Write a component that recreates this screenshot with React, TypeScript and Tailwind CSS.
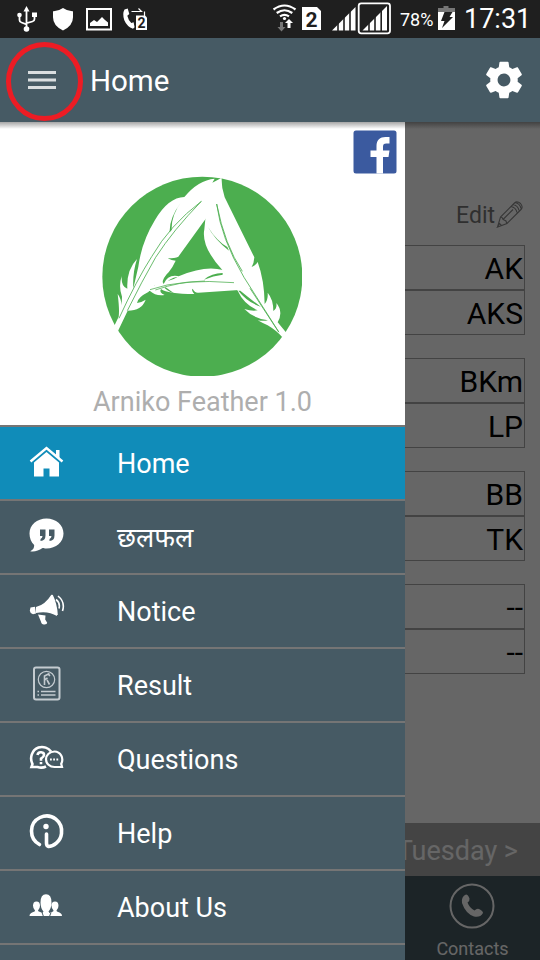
import React from "react";

const groups = [["AK", "AKS"], ["BKm", "LP"], ["BB", "TK"], ["--", "--"]];

function StatusBar() {
  return (
    <div className="flex h-[38px] shrink-0 items-center bg-[#1f1f1f] text-white">
      <svg className="ml-[16px]" width="22" height="38" viewBox="16 0 22 38" fill="none" stroke="#fff" strokeWidth="1.8">
        <path d="M26.500 10v18M19.500 16v4q0 2 2 2.500l5 1.800M34.500 16v3q0 2-2 2.500l-6 1.600" />
        <path d="M26.500 6l3 5.500h-6zM32 12.500h5v4.500h-5z" fill="#fff" stroke="none" />
        <circle cx="19.500" cy="15" r="2.300" fill="#fff" stroke="none" />
        <circle cx="26.500" cy="29" r="2.800" fill="#fff" stroke="none" />
      </svg>
      <svg className="ml-[14px]" width="22" height="38" viewBox="52 0 22 38">
        <path d="M63 8q5 3.500 10 3.200v6q0 8.500-10 13.200q-10-4.700-10-13.200v-6q5 .3 10-3.200z" fill="#fff" />
      </svg>
      <svg className="ml-[11px]" width="28" height="38" viewBox="85 0 28 38">
        <path d="M87 9h24v20.500H87z" fill="none" stroke="#fff" strokeWidth="2" />
        <path d="M90 26v-3l4-3 3 2 5-5 3 3 3 2.500v3.500z" fill="#fff" />
      </svg>
      <svg className="ml-[9px]" width="27" height="38" viewBox="122 0 27 38">
        <path d="M124.500 9.500l3.200-1 1.600 5.500-2 1.700q1 4.500 4 7.300l2.300-.8 1 5-1.600 1.500q-6-2-8.700-8.400-2.200-6.500.2-10.800z" fill="#fff" />
        <path d="M131.500 11.500h10l-3-3M144.500 16v-4.500" fill="none" stroke="#fff" strokeWidth="1.200" />
        <path d="M136 15.500h9l2 2v12.500h-11z" fill="#fff" />
        <text x="137.500" y="28" fontFamily="Roboto, sans-serif" fontSize="14" fontWeight="700" fill="#1f1f1f">2</text>
      </svg>
      <svg className="ml-[123px]" width="26" height="38" viewBox="272 0 26 38">
        <g fill="none" stroke="#fff" strokeWidth="2.200">
          <path d="M273.500 9.500q11-8 22 0M276.700 13q7.800-5.500 15.600 0M280 16.400q4.500-3 9 0" />
        </g>
        <circle cx="284.500" cy="18.500" r="1.600" fill="#fff" />
        <path d="M280 22h3v5h2.500l-4 4.500-4-4.500h2.500z" fill="#777" />
        <path d="M287.500 28v-5H285l4-4 4 4h-2.500v5z" fill="#fff" />
      </svg>
      <svg className="ml-[4px]" width="20" height="38" viewBox="302 0 20 38">
        <path d="M302 7h15l4 4v19h-19z" fill="#fff" />
        <text x="305.500" y="26.500" fontFamily="Roboto, sans-serif" fontSize="21" fontWeight="700" fill="#1f1f1f">2</text>
      </svg>
      <svg className="ml-[9px]" width="62" height="38" viewBox="331 0 62 38">
        <path d="M332 30.500L355.500 7v23.500z" fill="#fff" />
        <path d="M338 20v11M344 15v16M350 9v22" stroke="#1f1f1f" strokeWidth="1.600" />
        <rect x="358.700" y="3.300" width="31.300" height="30" rx="2.500" fill="#1f1f1f" stroke="#fff" strokeWidth="1.800" />
        <path d="M362.500 30.500L387 6v24.500z" fill="#fff" />
        <path d="M369 20v11M375 15v16M381.200 9v22" stroke="#1f1f1f" strokeWidth="1.600" />
      </svg>
      <span className="mt-[2px] ml-[7px] w-[36px] whitespace-nowrap text-[18px] leading-none">78%</span>
      <svg className="ml-[2px]" width="18" height="38" viewBox="438 0 18 38">
        <path d="M438 8h5.500V6h5v2h6.500v4h-17z" fill="#777" />
        <path d="M438 12h17v18h-17z" fill="#fff" />
        <path d="M444.500 12h8l-3 5h3.500l-11 11 2.500-7h-3.500z" fill="#1f1f1f" />
      </svg>
      <span className="ml-[8px] whitespace-nowrap text-[27px] leading-none">17:31</span>
    </div>
  );
}

function AppBar() {
  return (
    <div className="flex h-[84px] shrink-0 items-center bg-[#465a64] text-white">
      <svg width="84" height="84" viewBox="0 38 84 84">
        <ellipse cx="44.500" cy="81.500" rx="36" ry="37" fill="none" stroke="#ed1c24" strokeWidth="5" />
        <path d="M28 72.500h28M28 80h28M28 87.500h28" stroke="#dadee0" strokeWidth="3" />
      </svg>
      <span className="mt-[3px] ml-[6px] text-[29.5px] leading-none">Home</span>
      <svg className="mr-[14px] ml-auto" width="44" height="44" viewBox="0 0 24 24" fill="#fff">
        <path d="M19.430 12.980c.04-.32.07-.64.07-.98s-.03-.66-.07-.98l2.110-1.650c.19-.15.24-.42.12-.64l-2-3.460c-.12-.22-.39-.3-.61-.22l-2.490 1c-.52-.4-1.080-.73-1.690-.98l-.38-2.650A.488.488 0 0 0 14 2h-4c-.25 0-.46.18-.49.42l-.38 2.650c-.61.25-1.170.59-1.690.98l-2.490-1c-.23-.09-.49 0-.61.22l-2 3.460c-.13.22-.07.49.12.64l2.110 1.650c-.04.32-.07.65-.07.98s.03.66.07.98l-2.110 1.650c-.19.15-.24.42-.12.64l2 3.460c.12.22.39.3.61.22l2.490-1c.52.4 1.080.73 1.690.98l.38 2.650c.03.24.24.42.49.42h4c.25 0 .46-.18.49-.42l.38-2.650c.61-.25 1.170-.59 1.690-.98l2.490 1c.23.09.49 0 .61-.22l2-3.460c.12-.22.07-.49-.12-.64l-2.110-1.650zM12 15.500c-1.930 0-3.500-1.570-3.500-3.500s1.570-3.500 3.500-3.500 3.500 1.570 3.500 3.500-1.570 3.500-3.500 3.500z" />
      </svg>
    </div>
  );
}

function Logo() {
  return (
    <svg width="215" height="215" viewBox="0 0 645 645">
      <clipPath id="disc"><path d="M0 0h621v618H0z" /></clipPath>
      <circle cx="322" cy="320" r="300" fill="#4cae4f" clipPath="url(#disc)" />
      <g fill="#fff">
        <path d="M379 24L352 38L359 26Q310 30 268 81Q220 82 180 150Q140 215 130 290Q122 325 115 355Q112 310 126 267Q94 300 97 356Q78 350 80 318Q70 350 81 380L80 405Q78 385 68 372Q74 420 71 440L58 467L69 483L98 422Q140 422 152 389Q138 398 126 399Q128 382 160 366L195 330Q225 310 242 272Q230 272 218 265Q240 265 250 260L330 149L379 90Z" />
        <path d="M379 24Q380 55 389 82L440 185L478 262Q477 280 470 291Q483 286 488 276Q508 330 509 402Q520 390 518 368Q535 388 535 423Q547 415 544 399Q566 425 548 457L574 488L562 502Q545 482 518 466Q502 459 488 451Q505 454 519 451Q475 445 448 417Q470 424 488 421Q446 402 428 362L382 300Q318 230 328 178L331 148L345 60Z" />
        <path d="M384 300Q330 285 253 318Q238 328 218 333Q235 320 255 320Q220 310 206 342Q198 335 213 315Q184 325 178 347Q155 348 128 361Q148 358 165 363Q182 379 209 375Q191 368 198 357Q218 372 298 372Q288 360 293 356Q299 369 310 368L432 360Z" />
      </g>
      <g fill="none" stroke="#4cae4f">
        <path d="M319 94Q225 165 170 260Q125 330 72 445M319 94Q235 180 182 262Q140 335 97 422" strokeWidth="2.500" />
        <path d="M365 102Q378 205 447 322L552 487M365 102Q389 225 442 304M465 355L551 486" strokeWidth="2.500" />
        <path d="M165 359Q260 325 417 338M181 360Q250 335 330 333" strokeWidth="2.300" />
      </g>
      <g fill="#4cae4f">
        <path d="M259 95Q222 145 224 187L230 180Q228 137 259 95ZM339 171Q360 210 402 242L397 231Q365 213 339 171ZM383 309Q350 309 327 329Q355 317 383 314ZM430 362Q457 397 497 410Q470 390 436 362ZM212 352L237 370Q217 363 208 353Z" />
      </g>
    </svg>
  );
}

const icons: Record<string, React.ReactNode> = {
  home: (
    <>
      <path d="M30.500 461.500L46.500 448l16 13.500" fill="none" stroke="#fff" strokeWidth="2.400" />
      <path d="M34 462.500l12.500-10.500L59 462.500v14h-9.500V468.500H43.500v8h-9.500zM56 450h3.500v8.500L56 455z" />
    </>
  ),
  talk: (
    <>
      <path d="M46.500 518.500c9.500 0 17 6.500 17 15s-7.500 15-17 15c-2 0-3 0-4-.4-4 2.700-8 4-12.300 3.200 3-1.300 4-3.500 4-6.200-3-2.900-4.700-7-4.700-11.600 0-8.500 7.500-15 17-15z" />
      <path d="M40 529.500h5.500v6q0 5-5 5.500v-2q2-.8 2-3H40zM49 529.500h5.500v6q0 5-5 5.500v-2q2-.8 2-3H49z" fill="#465a64" />
    </>
  ),
  notice: (
    <>
      <path d="M36 607q9-2 15.500-12.500 5.500 9 5.500 21.500-9-5.500-21-3zM30.500 607.500l4.500-.8 1 6.800-3 .8q-3-1-3.200-3.500zM38 614.500l7.500 1-.3 4 2 3.200q0 2-3.300 1.800-2.500 0-3-3z" />
      <path d="M52 595q4.500 9 5 20M56 599.500q4.500 3.500 3 9M58 596q7.500 6 4.500 15" fill="none" stroke="#fff" strokeWidth="1.600" />
    </>
  ),
  result: (
    <g fill="none" stroke="#c4cbd0">
      <rect x="34" y="667.500" width="25.500" height="32" rx="2" strokeWidth="2" />
      <circle cx="46.500" cy="679.500" r="8.200" strokeWidth="1.200" />
      <path d="M44.500 685v-9l5-2.500M44.500 680l3-2M47 680l2.500 4.500M48 674l2 2M37.500 691.500h1.500M41 691.500h14.500M37.500 695h1.500M41 695h14.500" strokeWidth="1.600" />
    </g>
  ),
  questions: (
    <g fill="none" stroke="#fff" strokeWidth="2.600">
      <path d="M46 766.500q-4 2-8.500.5H31.500l1-3c-3-5.500-1-14 6-16.500 5-1.500 10 .5 12.500 4" />
      <path d="M54.500 751.500c-4.700 0-8.500 3.500-8.500 7.800s3.800 7.700 8.500 7.700h7.500l-.8-3.200c3-5.500-.7-12.300-6.700-12.300z" strokeWidth="2.200" />
      <path d="M37.500 755q.5-3 3.700-2.700 3 .3 2.800 2.700 0 1.700-3 3.700v2M41 762v2.200" />
      <path d="M50 759.500h1.800M53.200 759.500h1.800M56.400 759.500h1.800" strokeWidth="1.800" />
    </g>
  ),
  help: (
    <g fill="none" stroke="#fff" strokeWidth="3.600" strokeLinecap="round">
      <path d="M39.500 844.500C29 839 28.500 823 40 817.500C52 812 63 822 61.500 833.500C60.500 842 53 846.500 48.500 846.500Q46.500 846 46.500 843V834" />
      <circle cx="46" cy="826.500" r="2.700" fill="#fff" stroke="none" />
    </g>
  ),
  about: (
    <>
      <path d="M29.500 916q0-3 4.500-4.200 1.200-.5 1-1.300-2-2-2-4.700 0-4.300 3.500-4.300t3.500 4.300q0 2.700-2 4.700 0 .8 1.500 1.300l3 1.200 1-1.500q-3-3.500-3-9 0-8.300 5.500-8.300t5.500 8.300q0 5.500-3 9l1 1.500 3-1.200q1.200-.5 1-1.300-2-2-2-4.700 0-4.300 3.500-4.300t3.500 4.300q0 2.700-2 4.700 0 .8 1 1.300 4.500 1.200 4.500 4.200z" />
      <path d="M42 912.500l1.300 3.500M51 912.500l-1.300 3.500" stroke="#465a64" strokeWidth="1" />
    </>
  ),
};

const items = [
  { id: "home", label: "Home" },
  { id: "talk", label: "छलफल" },
  { id: "notice", label: "Notice" },
  { id: "result", label: "Result" },
  { id: "questions", label: "Questions" },
  { id: "help", label: "Help" },
  { id: "about", label: "About Us" },
];

function Drawer() {
  return (
    <nav className="absolute top-0 left-0 flex h-full w-[405px] flex-col overflow-hidden bg-[#465a64]">
      <div className="flex h-[303px] shrink-0 flex-col bg-white">
        <div className="flex h-[48px] justify-end pt-[8px] pr-[8px]">
          <svg width="44" height="44" viewBox="0 0 44 44">
            <rect x=".5" y=".5" width="43" height="43" rx="2.500" fill="#3b5a9f" />
            <path d="M23.500 43.500V27h-6v-6.500h6V16c0-6 3.500-9 9-9h4v6.500h-3.200c-2.500 0-3.300 1-3.300 3.500v3.500h6.500l-1 6.500H30v16.500z" fill="#fff" />
          </svg>
        </div>
        <div className="flex h-[215px] justify-center"><Logo /></div>
        <div className="mt-[4px] text-center text-[27px] leading-[27px] text-[#aeaeae]">Arniko Feather 1.0</div>
      </div>
      {items.map((item, i) => (
        <div key={item.id} className={`flex h-[74px] shrink-0 items-center border-t-2 border-[#757575] pb-[1px] text-[27px] text-white ${i === 0 ? "bg-[#108cb9]" : ""}`}>
          <svg className="mr-[51px] ml-[28px]" width="38" height="71" viewBox={`28 ${427 + i * 74} 38 71`} fill="#fff">
            {icons[item.id]}
          </svg>
          <span className="mt-[4px] leading-none">{item.label}</span>
        </div>
      ))}
      <div className="h-[20px] shrink-0 border-t-2 border-[#757575]" />
    </nav>
  );
}

function Schedule() {
  return (
    <div className="flex h-full flex-col bg-white text-right">
      <div className="flex h-[123px] items-end justify-end pr-[16px] pb-[16px] text-[#777]">
        <span className="text-[23px] leading-[26px]">Edit</span>
        <svg className="mb-px ml-px" width="28" height="28" viewBox="496 198 28 28" fill="none" stroke="#888" strokeWidth="1.100">
          <path d="M497.500 225l3-10 14-14q2.500-2.500 6 .5 3 3.500.5 6l-14 14zM500.500 215q2 0 2.500 2.500l3 1.500q.5 2 1 2.500M503 217.500l10-10M511 204.500q5 1 6 6M513 202.500q5 1 6 6M515 200.500q5 1 6 6M497.500 225l4-1.500-2-2z" />
        </svg>
      </div>
      <div className="flex flex-col gap-[23px] pr-[15px]">
        {groups.map((g, i) => (
          <div key={i}>
            {g.map((t, j) => (
              <div key={j} className="h-[45px] border border-[#a7a7a7] pr-px text-[30px] leading-[45px] text-black">{t}</div>
            ))}
          </div>
        ))}
      </div>
      <div className="mt-auto h-[53px] shrink-0 bg-[#aaaaaa] pr-[22px] text-[27px] leading-[57px] text-white">Tuesday &gt;</div>
      <div className="flex h-[84px] shrink-0 justify-end bg-[#465a62]">
        <div className="flex w-[135px] flex-col items-center pt-[7px] text-white">
          <svg className="-ml-px" width="46" height="46" viewBox="0 0 46 46">
            <circle cx="23" cy="23" r="21.500" fill="none" stroke="#fff" strokeWidth="2" />
            <path d="M17 11.500q2 0 3.500 4 .5 2-2 4 2 5.500 7 8 2.500-2.500 4.500-1.500 4 2 4 4-3 5-9 3.500-8.500-3-12-13.500-1-6.500 4-8.500z" fill="#fff" />
          </svg>
          <span className="mt-[10px] text-[18px] leading-[20px]">Contacts</span>
        </div>
      </div>
    </div>
  );
}

export default function App() {
  return (
    <div className="flex h-[960px] w-[540px] flex-col overflow-hidden font-['Roboto','Noto_Sans',sans-serif]">
      <StatusBar />
      <AppBar />
      <main className="relative h-[838px] shrink-0">
        <Schedule />
        <div className="absolute inset-0 bg-black/60" />
        <Drawer />
        <div className="absolute inset-x-0 top-0 h-[7px] bg-linear-to-b from-black/35 to-transparent" />
      </main>
    </div>
  );
}
